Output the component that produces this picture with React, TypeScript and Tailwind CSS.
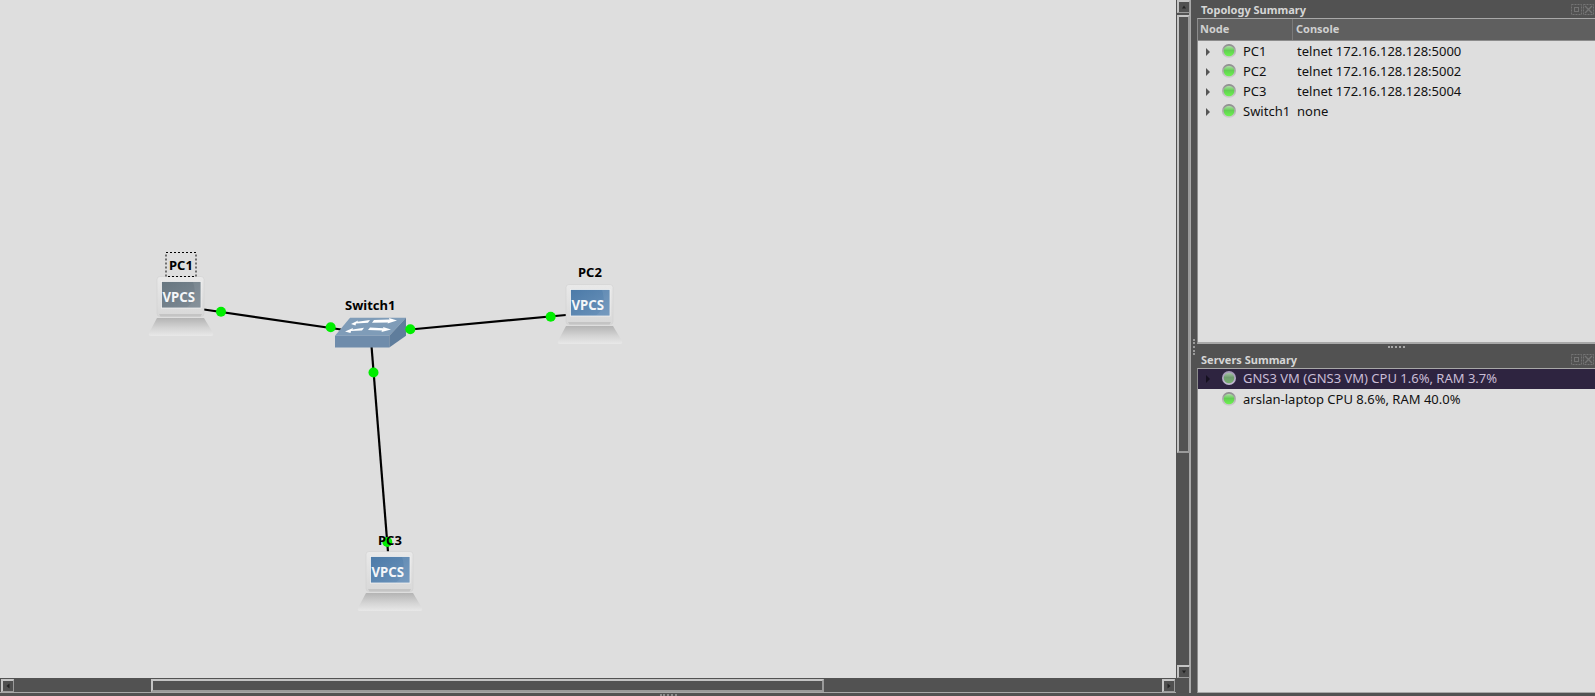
import React from 'react';

const ScrollButton = ({ dir }: { dir: 'up' | 'down' | 'left' | 'right' }) => {
  const points = {
    up: '4,7.5 6,4.5 8,7.5',
    down: '4,4.5 8,4.5 6,7.5',
    left: '7.5,3.5 7.5,8.5 4.5,6',
    right: '4.5,3.5 4.5,8.5 7.5,6',
  }[dir];
  return (
    <div className="w-[13px] h-[13px] shrink-0 bg-[#505050] border-t-2 border-l-2 border-r border-b border-t-[#c4c4c4] border-l-[#c4c4c4] border-r-[#9a9a9a] border-b-[#9a9a9a] flex items-center justify-center">
      <svg width="12" height="12" viewBox="0 0 12 12" className="shrink-0">
        <polygon points={points} fill="#222222" />
      </svg>
    </div>
  );
};

const Led = ({ selected }: { selected?: boolean }) => {
  const fill = selected ? 'ledSel' : 'led';
  const ring = selected ? 'ringSel' : 'ring';
  return (
    <svg width="16" height="16" viewBox="0 0 16 16" className="shrink-0">
      <defs>
        <linearGradient id={fill} x1="0" y1="0" x2="0" y2="1">
          <stop offset="0%" stopColor={selected ? '#a9c4a9' : '#b4dcae'} />
          <stop offset="45%" stopColor={selected ? '#6f9c6f' : '#62cf52'} />
          <stop offset="100%" stopColor={selected ? '#79b070' : '#6cf44e'} />
        </linearGradient>
        <linearGradient id={ring} x1="0" y1="0" x2="0" y2="1">
          <stop offset="0%" stopColor={selected ? '#a197b4' : '#8a8a8a'} />
          <stop offset="100%" stopColor={selected ? '#c6bdd6' : '#d2d2d2'} />
        </linearGradient>
      </defs>
      <circle cx="8" cy="7" r="7" fill={`url(#${ring})`} />
      <circle cx="8" cy="7" r="5.3" fill={`url(#${fill})`} />
    </svg>
  );
};

const Arrow = ({ dark }: { dark?: boolean }) => (
  <svg width="6" height="10" viewBox="0 0 6 10" className="shrink-0">
    <polygon points="1,1 5,5 1,9" fill={dark ? '#15101f' : '#555555'} />
  </svg>
);

const PanelTitle = ({ title }: { title: string }) => (
  <div className="h-[18px] shrink-0 flex items-center pl-1 pr-[1px] text-[11px] font-bold text-[#d6d6d6]">
    <span className="flex-1 leading-none">{title}</span>
    <svg width="23" height="11" viewBox="0 0 23 11" fill="none" stroke="#747474" className="shrink-0">
      <rect x="0.5" y="0.5" width="10" height="10" strokeDasharray="2 1" />
      <rect x="3.5" y="3.5" width="4" height="4" />
      <rect x="12.5" y="0.5" width="10" height="10" strokeDasharray="2 1" />
      <path d="M14 2l7 7M21 2l-7 7" strokeWidth="1.4" />
    </svg>
  </div>
);

const nodes = [
  { name: 'PC1', console: 'telnet 172.16.128.128:5000' },
  { name: 'PC2', console: 'telnet 172.16.128.128:5002' },
  { name: 'PC3', console: 'telnet 172.16.128.128:5004' },
  { name: 'Switch1', console: 'none' },
];

const Vpcs = ({ x, y, gray }: { x: number; y: number; gray?: boolean }) => (
  <g transform={`translate(${x} ${y})`}>
    <rect x="8" y="0.5" width="47" height="40" rx="3" fill="url(#monitor)" stroke="#d0d0d0" strokeWidth="0.6" />
    <path d="M10 38h43l-1.5 2.5h-40z" fill="#c4c4c4" />
    <rect x="12.5" y="5.5" width="39.5" height="26.5" fill={gray ? 'url(#screenGray)' : 'url(#screenBlue)'} stroke="#f2f2f2" strokeWidth="0.8" />
    <path d="M44 6h7.6v25.6h-14c8-5 10-15 6.4-25.6z" fill="#ffffff" opacity="0.07" />
    <path d="M8 42h47l9 15q1 3-2 3h-60q-3 0-2-3z" fill="url(#base)" />
    <text x="13.5" y="25.5" textLength="32.5" lengthAdjust="spacingAndGlyphs" fontSize="14" fontWeight="700" fill="#f4f6f8" fontFamily="'Noto Sans', sans-serif">VPCS</text>
  </g>
);

const Topology = () => (
  <svg width="1176" height="678" className="absolute inset-0">
    <defs>
      <linearGradient id="monitor" x1="0" y1="0" x2="0" y2="1">
        <stop offset="0%" stopColor="#e9e9e9" />
        <stop offset="100%" stopColor="#d8d8d8" />
      </linearGradient>
      <linearGradient id="base" x1="0" y1="0" x2="0" y2="1">
        <stop offset="0%" stopColor="#b4b4b4" />
        <stop offset="55%" stopColor="#d4d4d4" />
        <stop offset="100%" stopColor="#e8e8e8" />
      </linearGradient>
      <linearGradient id="screenBlue" x1="0" y1="0" x2="1" y2="1">
        <stop offset="0%" stopColor="#4b7aa8" />
        <stop offset="100%" stopColor="#6d94bb" />
      </linearGradient>
      <linearGradient id="screenGray" x1="0" y1="0" x2="1" y2="1">
        <stop offset="0%" stopColor="#66757f" />
        <stop offset="100%" stopColor="#7f8b95" />
      </linearGradient>
    </defs>
    <g stroke="#000000" strokeWidth="2.2">
      <line x1="204" y1="309.5" x2="341" y2="329.5" />
      <line x1="405" y1="330" x2="566" y2="315" />
      <line x1="371.5" y1="346" x2="388" y2="552" />
    </g>
    <Vpcs x={149} y={276} gray />
    <Vpcs x={558} y={284} />
    <Vpcs x={358} y={551} />
    <rect x="166" y="252.5" width="30" height="24" fill="none" stroke="#000000" strokeDasharray="2 2" />
    <polygon points="350,317.7 406,317.7 389.3,335.7 335,335.7" fill="#7f9cb8" />
    <polygon points="335,335.7 389.3,335.7 389.3,347.5 335,347.5" fill="#6f8cab" />
    <polygon points="389.3,335.7 406,317.7 406,335.7 389.3,347.5" fill="#5f7d9c" />
    <g fill="#ffffff">
      <polygon points="351,324 358,320.5 357.5,321.8 370,320 368,322.8 356,323.6 355.5,325.5" />
      <polygon points="397,320.5 389,318 389.5,319.6 374,320 372,322.8 388,322.4 387.5,323.5" />
      <polygon points="345,331.5 353,328 352.5,329.4 364,327.8 362,330.4 351,331 350.5,333" />
      <polygon points="391,329.5 383,327 383.5,328.2 370,327.5 368,330 382,330.4 381.5,332" />
    </g>
    <g fill="#00ee00">
      <circle cx="221" cy="311.7" r="5" />
      <circle cx="330.7" cy="327.3" r="5" />
      <circle cx="410.3" cy="329.3" r="5" />
      <circle cx="550.7" cy="316.7" r="5" />
      <circle cx="373.5" cy="372.5" r="5" />
      <circle cx="387.3" cy="542" r="5" />
    </g>
  </svg>
);

const NodeLabel = ({ text, className }: { text: string; className: string }) => (
  <span className={`absolute text-[13px] font-bold leading-none text-black ${className}`}>{text}</span>
);

const App = () => {
  return (
    <div className="w-[1595px] h-[696px] overflow-hidden flex flex-col bg-[#525252] font-['Noto_Sans',sans-serif]">
      <div className="flex h-[693px] shrink-0">
        <div className="w-[1176px] shrink-0 flex flex-col">
          <div className="relative h-[678px] shrink-0 bg-[#dedede]">
            <Topology />
            <NodeLabel text="PC1" className="left-[169px] top-[259px]" />
            <NodeLabel text="Switch1" className="left-[345px] top-[299px]" />
            <NodeLabel text="PC2" className="left-[578px] top-[266px]" />
            <NodeLabel text="PC3" className="left-[378px] top-[534px]" />
          </div>
          <div className="flex-1 flex items-start pt-px pl-px pr-px border-b border-[#a8a8a8]">
            <ScrollButton dir="left" />
            <div className="ml-[137px] w-[673px] h-[13px] shrink-0 border-t-2 border-l-2 border-r-2 border-b-2 border-t-[#c4c4c4] border-l-[#c4c4c4] border-r-[#9a9a9a] border-b-[#9a9a9a]" />
            <div className="flex-1" />
            <ScrollButton dir="right" />
          </div>
        </div>
        <div className="w-[15px] shrink-0 flex flex-col items-start pl-px border-r-2 border-[#a8a8a8]">
          <ScrollButton dir="up" />
          <div className="mt-[2px] w-[13px] h-[438px] shrink-0 border-t-2 border-l-2 border-r-2 border-b-2 border-t-[#c4c4c4] border-l-[#c4c4c4] border-r-[#9a9a9a] border-b-[#9a9a9a]" />
          <div className="flex-1" />
          <ScrollButton dir="down" />
          <div className="h-[15px] shrink-0" />
        </div>
        <div className="w-[6px] shrink-0 flex items-center justify-center">
          <div className="w-[2px] h-[16px] border-l-2 border-dotted border-[#9a9a9a]" />
        </div>
        <div className="flex-1 flex flex-col min-w-0">
          <PanelTitle title="Topology Summary" />
          <div className="h-[326px] shrink-0 bg-[#dedede] border-t border-[#a8a8a8] border-b-2 border-b-[#a8a8a8] border-l border-l-[#8c8c8c]">
            <div className="h-[22px] flex bg-[#5f5f5f] text-[11px] font-bold text-[#d0d0d0] border-b border-[#8c8c8c]">
              <div className="w-[95px] pl-[2px] flex items-center border-r border-[#7a7a7a]">Node</div>
              <div className="pl-[3px] flex items-center">Console</div>
            </div>
            <div className="pt-[1px]">
              {nodes.map(node => (
                <div key={node.name} className="h-5 flex items-center text-[13px] text-[#111111]">
                  <div className="w-[37px] shrink-0 pl-[7px] flex justify-between items-center">
                    <Arrow />
                    <span className="w-4 -mr-[2px]"><Led /></span>
                  </div>
                  <span className="ml-[8px] w-[53px] shrink-0 whitespace-nowrap">{node.name}</span>
                  <span className="ml-[1px] whitespace-nowrap">{node.console}</span>
                </div>
              ))}
            </div>
          </div>
          <div className="h-[6px] shrink-0 flex items-center justify-center">
            <div className="w-[17px] h-[2px] border-t-2 border-dotted border-[#a8a8a8]" />
          </div>
          <PanelTitle title="Servers Summary" />
          <div className="flex-1 bg-[#dedede] border-t border-[#a8a8a8] border-l border-l-[#8c8c8c] border-b border-b-[#a8a8a8] text-[13px]">
            <div className="h-5 flex items-center bg-[#2e2440] text-[#c9bdd6]">
              <div className="w-[37px] shrink-0 pl-[7px] flex justify-between items-center">
                <Arrow dark />
                <span className="w-4 -mr-[2px]"><Led selected /></span>
              </div>
              <span className="ml-[8px] whitespace-nowrap">GNS3 VM (GNS3 VM) CPU 1.6%, RAM 3.7%</span>
            </div>
            <div className="h-5 mt-px flex items-center text-[#111111]">
              <div className="w-[37px] shrink-0 flex justify-end">
                <span className="w-4 -mr-[2px]"><Led /></span>
              </div>
              <span className="ml-[8px] whitespace-nowrap">arslan-laptop CPU 8.6%, RAM 40.0%</span>
            </div>
          </div>
        </div>
      </div>
      <div className="flex-1 pl-[660px] flex items-center">
        <div className="w-[17px] h-[2px] border-t-2 border-dotted border-[#8c8c8c]" />
      </div>
    </div>
  );
};

export default App;
